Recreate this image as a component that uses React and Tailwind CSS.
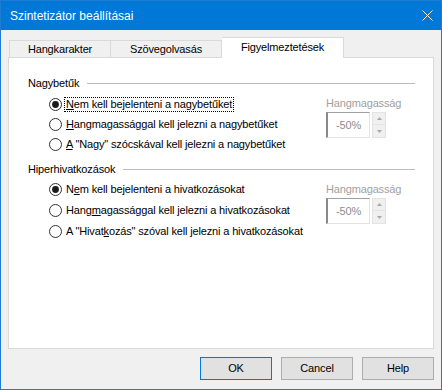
import React from "react";

function RadioIcon({ checked }) {
  return (
    <svg width="13" height="13" viewBox="0 0 13 13" className="shrink-0">
      <circle cx="6.5" cy="6.5" r="6" fill="#ffffff" stroke="#333333" strokeWidth="1" />
      {checked && <circle cx="6.5" cy="6.5" r="3.4" fill="#1a1a1a" />}
    </svg>
  );
}

function Radio({ checked, focus, h, children }) {
  return (
    <div className={h === 21 ? "flex items-center h-[21px]" : "flex items-center h-[20px]"}>
      <RadioIcon checked={checked} />
      <span
        className={
          focus
            ? "ml-[2px] px-px leading-[13px] border border-dotted border-black"
            : "ml-[2px] px-px leading-[13px] border border-transparent"
        }
      >
        {children}
      </span>
    </div>
  );
}

function Spin() {
  return (
    <div className="flex mt-[2px]">
      <div className="w-[44px] h-[26px] bg-white border-l-2 border-t border-r border-b border-l-[#8a8a8a] border-t-[#a0a0a0] border-r-[#e3e3e3] border-b-[#e3e3e3] flex items-center pl-[8px] text-[#8c8c8c]">
        -50%
      </div>
      <div className="ml-[2px] w-[14px] h-[26px] flex flex-col">
        <div className="h-[13px] bg-[#f0f0f0] border border-[#e3e3e3] flex items-center justify-center">
          <svg width="5" height="3" viewBox="0 0 5 3">
            <path d="M0 3 L2.5 0 L5 3 Z" fill="#a8a8a8" />
          </svg>
        </div>
        <div className="h-[13px] bg-[#f0f0f0] border border-[#e3e3e3] border-t-0 flex items-center justify-center">
          <svg width="5" height="3" viewBox="0 0 5 3">
            <path d="M0 0 L2.5 3 L5 0 Z" fill="#a8a8a8" />
          </svg>
        </div>
      </div>
    </div>
  );
}

function GroupHeader({ children, className }) {
  return (
    <div className={"flex items-center pl-[19px] pr-[18px] h-[13px] " + className}>
      <span className="leading-[13px]">{children}</span>
      <div className="flex-1 h-px bg-[#bcbcbc] ml-[8px]" />
    </div>
  );
}

export default function App() {
  return (
    <div className="w-[442px] h-[390px] bg-[#f0f0f0] border border-[#1f7bd4] flex flex-col font-['Liberation_Sans',Arial,sans-serif] text-[11px] tracking-[-0.15px] text-black overflow-hidden">
      {/* Title bar */}
      <div className="h-[29px] bg-[#0078d7] flex items-center justify-between pl-[9px] pr-[8px] shrink-0">
        <span className="text-white text-[12px] leading-[16px] tracking-normal">Szintetizátor beállításai</span>
        <svg width="11" height="11" viewBox="0 0 11 11">
          <path d="M0.5 0.5 L10.5 10.5 M10.5 0.5 L0.5 10.5" stroke="#ffffff" strokeWidth="1" />
        </svg>
      </div>

      {/* Tabs + panel */}
      <div className="mx-[7px] mt-[8px] flex flex-col">
        <div className="flex items-end h-[19px] pl-px">
          <div className="w-[102px] h-[17px] bg-[#f0f0f0] border border-b-0 border-[#d9d9d9] flex items-center justify-center leading-[13px] pt-px">
            Hangkarakter
          </div>
          <div className="w-[111px] h-[17px] bg-[#f0f0f0] border border-b-0 border-l-0 border-[#d9d9d9] flex items-center justify-center leading-[13px] pt-px">
            Szövegolvasás
          </div>
          <div className="w-[122px] h-[21px] -mb-px relative z-10 bg-white border border-b-0 border-l-0 border-[#d9d9d9] flex items-center justify-center leading-[13px] pb-px">
            Figyelmeztetések
          </div>
        </div>
        <div className="h-[292px] bg-white border border-[#d9d9d9] flex flex-col pt-[19px]">
          <GroupHeader className="">Nagybetűk</GroupHeader>
          <div className="flex mt-[4px]">
            <div className="flex-1 pl-[40px] flex flex-col">
              <Radio checked focus>
                <u>N</u>em kell bejelenteni a nagybetűket
              </Radio>
              <Radio>
                <u>H</u>angmagassággal kell jelezni a nagybetűket
              </Radio>
              <Radio>
                <u>A</u> "Nagy" szócskával kell jelezni a nagybetűket
              </Radio>
            </div>
            <div className="w-[62px] mr-[45px] pt-[3px] flex flex-col">
              <span className="leading-[13px] text-[#a0a0a0] whitespace-nowrap">Hangmagasság</span>
              <Spin />
            </div>
          </div>

          <GroupHeader className="mt-[9px]">Hiperhivatkozások</GroupHeader>
          <div className="flex mt-[3px]">
            <div className="flex-1 pl-[40px] flex flex-col">
              <Radio checked h={21}>
                N<u>e</u>m kell bejelenteni a hivatkozásokat
              </Radio>
              <Radio h={21}>
                Hang<u>m</u>agassággal kell jelezni a hivatkozásokat
              </Radio>
              <Radio h={21}>
                A "Hivat<u>k</u>ozás" szóval kell jelezni a hivatkozásokat
              </Radio>
            </div>
            <div className="w-[62px] mr-[45px] pt-[4px] flex flex-col">
              <span className="leading-[13px] text-[#a0a0a0] whitespace-nowrap">Hangmagasság</span>
              <Spin />
            </div>
          </div>
        </div>
      </div>

      {/* Buttons */}
      <div className="flex justify-end gap-[9px] pr-[7px] mt-[8px]">
        <div className="w-[72px] h-[23px] bg-[#e1e1e1] border border-[#0078d7] flex items-center justify-center">OK</div>
        <div className="w-[72px] h-[23px] bg-[#e1e1e1] border border-[#adadad] flex items-center justify-center">Cancel</div>
        <div className="w-[72px] h-[23px] bg-[#e1e1e1] border border-[#adadad] flex items-center justify-center">Help</div>
      </div>
    </div>
  );
}
